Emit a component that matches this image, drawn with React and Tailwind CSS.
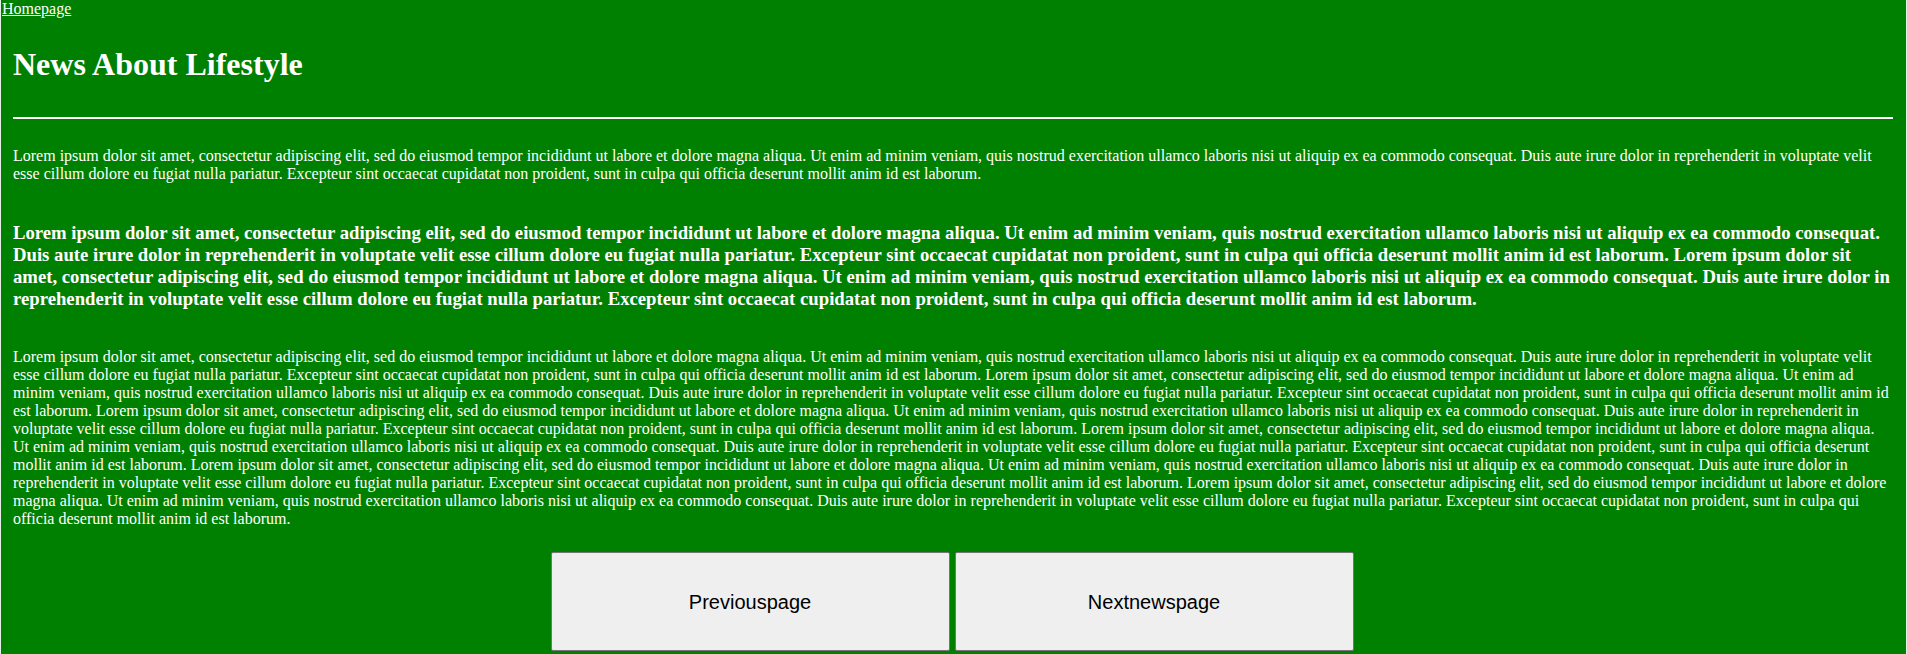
import React from "react";

const lorem =
  "Lorem ipsum dolor sit amet, consectetur adipiscing elit, sed do eiusmod tempor incididunt ut labore et dolore magna aliqua. Ut enim ad minim veniam, quis nostrud exercitation ullamco laboris nisi ut aliquip ex ea commodo consequat. Duis aute irure dolor in reprehenderit in voluptate velit esse cillum dolore eu fugiat nulla pariatur. Excepteur sint occaecat cupidatat non proident, sunt in culpa qui officia deserunt mollit anim id est laborum.";

const repeat = (n) => Array(n).fill(lorem).join(" ");

const App = () => {
  return (
    <div className="min-h-[654px] bg-[#008000] text-white font-['Liberation_Serif','Times_New_Roman',serif] border-x border-[#e6efe6] overflow-hidden">
      {/* Top link */}
      <a href="#" className="block w-fit pl-px text-[16px] leading-[18px] underline">
        Homepage
      </a>

      <div className="pl-[12px] pr-[13px]">
        <h1 className="mt-[28px] text-[32px] leading-[37px] font-bold">
          News About Lifestyle
        </h1>
        <hr className="mt-[34px] h-[2px] border-0 bg-white" />

        <p className="mt-[28px] text-[16px] leading-[18px]">{lorem}</p>

        <h3 className="mt-[39px] text-[18.72px] leading-[22px] font-bold">
          {repeat(2)}
        </h3>

        <p className="mt-[38px] text-[16px] leading-[18px]">{repeat(6)}</p>

        {/* Pager */}
        <div className="mt-[24px] flex justify-center gap-[5px] pr-[2px]">
          <button className="w-[399px] h-[99px] bg-[#efefef] border border-[#767676] rounded-[2px] text-black text-[20px] font-['Liberation_Sans',Arial,sans-serif]">
            Previouspage
          </button>
          <button className="w-[399px] h-[99px] bg-[#efefef] border border-[#767676] rounded-[2px] text-black text-[20px] font-['Liberation_Sans',Arial,sans-serif]">
            Nextnewspage
          </button>
        </div>
      </div>
    </div>
  );
};

export default App;
